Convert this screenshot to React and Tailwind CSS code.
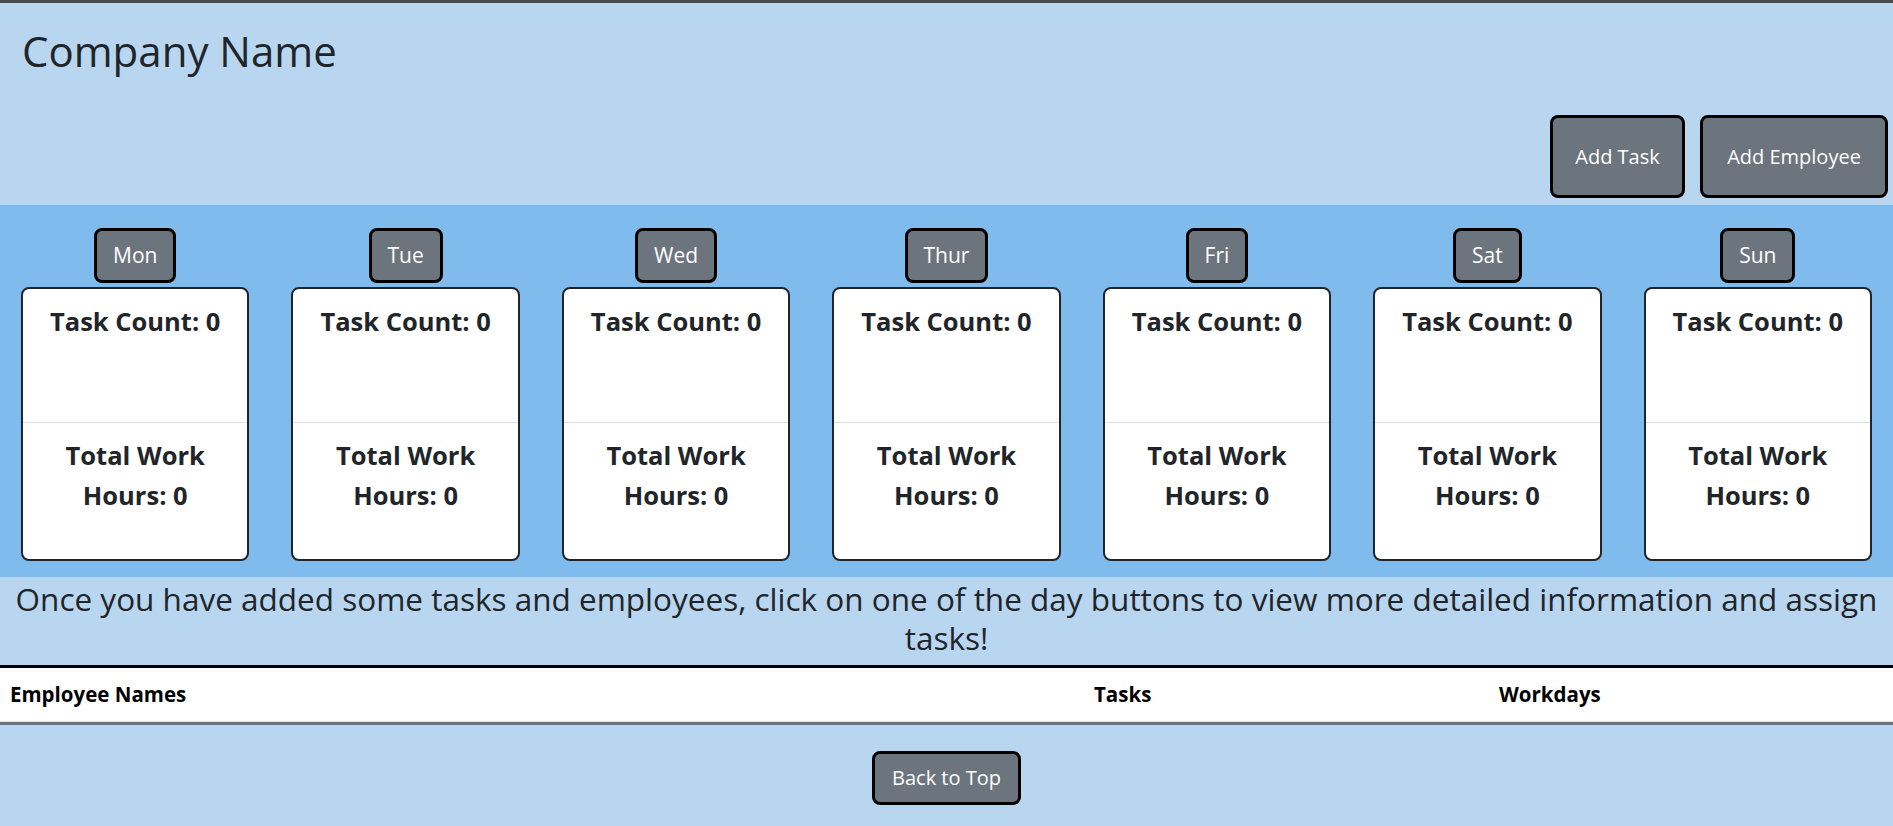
import React from "react";

const days = ["Mon", "Tue", "Wed", "Thur", "Fri", "Sat", "Sun"];

function DayColumn({ day }) {
  return (
    <div className="flex flex-col items-center">
      <button className="h-[55px] px-[16px] rounded-lg border-[3px] border-black bg-[#6c757d] text-white text-[21px] leading-none">
        {day}
      </button>
      <div className="mt-[4px] self-stretch mx-[21px] h-[274px] bg-white border-2 border-[#212529] rounded-lg flex flex-col text-[#212529] font-bold text-[25.5px] text-center">
        <div className="h-[134px] pt-[17px] leading-[1.2] border-b border-[#dee2e6]">Task Count: 0</div>
        <div className="pt-[12px] px-4 leading-[40px]">Total Work Hours: 0</div>
      </div>
    </div>
  );
}

export default function App() {
  return (
    <div className="w-full min-h-[826px] bg-[#b8d6f0] text-[#212529]" style={{ fontFamily: '"Open Sans", "Noto Sans", sans-serif' }}>
      <div className="h-[3px] bg-[#4a4a4a]" />
      <header className="h-[202px] flex flex-col bg-[#b8d6f0]">
        <h1 className="pl-[22px] pt-[23px] text-[42px] leading-[1.2] font-medium">Company Name</h1>
        <div className="mt-auto mb-[7px] flex justify-end gap-[15px] pr-[5px]">
          <button className="h-[83px] w-[135px] rounded-lg border-[3px] border-black bg-[#6c757d] text-white text-[20px]">
            Add Task
          </button>
          <button className="h-[83px] w-[188px] rounded-lg border-[3px] border-black bg-[#6c757d] text-white text-[20px]">
            Add Employee
          </button>
        </div>
      </header>
      <section className="bg-[#80bbee] pt-[23px] pb-[16px] grid grid-cols-7">
        {days.map((d) => (
          <DayColumn key={d} day={d} />
        ))}
      </section>
      <section className="pt-[2px] pb-[8px] px-2 text-center text-[31.5px] leading-[39px] font-medium">
        Once you have added some tasks and employees, click on one of the day buttons to view more detailed information and assign tasks!
      </section>
      <div className="bg-white border-t-[3px] border-black">
        <div className="h-[54px] grid grid-cols-[1082px_405px_1fr] items-center font-bold text-[20.5px] text-black border-b border-[#dee2e6]">
          <div className="pl-[10px]">Employee Names</div>
          <div className="pl-3">Tasks</div>
          <div className="pl-3">Workdays</div>
        </div>
        <div className="h-[3px] bg-[#6c757d]" />
      </div>
      <div className="flex justify-center pt-[26px]">
        <button className="h-[54px] w-[149px] rounded-lg border-[3px] border-black bg-[#6c757d] text-white text-[20px]">
          Back to Top
        </button>
      </div>
    </div>
  );
}
